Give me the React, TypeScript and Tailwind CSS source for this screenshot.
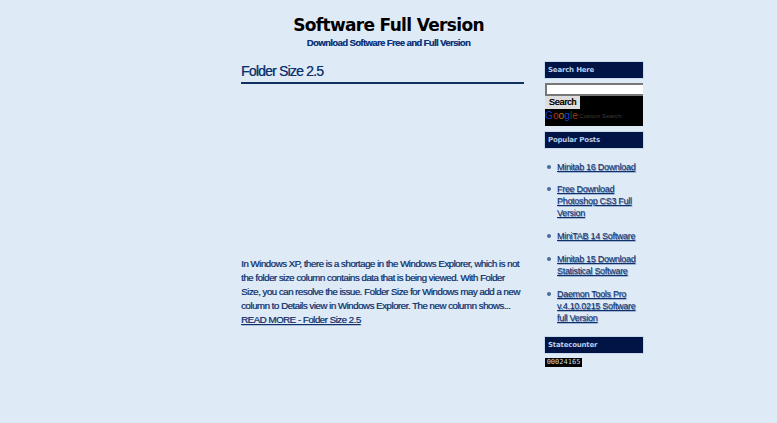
const posts = [
  { title: 'Minitab 16 Download', cls: 'mb-[10px]' },
  { title: 'Free Download Photoshop CS3 Full Version', cls: 'mb-[11px]' },
  { title: 'MiniTAB 14 Software', cls: 'mb-[11px]' },
  { title: 'Minitab 15 Download Statistical Software', cls: 'mb-[11px]' },
  { title: 'Daemon Tools Pro v.4.10.0215 Software full Version', cls: '' },
]

function WidgetTitle({ children }: { children: string }) {
  return (
    <h2 className="h-[16px] bg-[#001446] pl-[3px] font-['DejaVu_Sans',sans-serif] text-[7px] leading-[17px] font-bold tracking-[-0.2px] text-[#b4cde9] outline outline-1 outline-[#c9d9ec]">
      {children}
    </h2>
  )
}

export default function App() {
  return (
    <div className="min-h-[423px] bg-[#dfeaf7] font-['Liberation_Sans',sans-serif]">
      <div className="mx-auto w-[509px]">
        <header className="pt-[14px] text-center">
          <h1 className="font-['DejaVu_Sans',sans-serif] text-[17px] leading-[22px] font-bold tracking-[-0.67px] text-black">
            Software Full Version
          </h1>
          <p className="mt-[1px] text-[9.5px] leading-[12px] font-bold tracking-[-0.6px] text-[#0c3278] [text-shadow:0.3px_0.3px_0.4px_#5f7fb0]">
            Download Software Free and Full Version
          </p>
        </header>

        <div className="mt-[13px] flex">
          <div className="ml-auto flex w-[402px] justify-between">
            <main className="w-[283px] text-[#0f2f63]">
              <h2 className="border-b-2 border-[#10305f] pb-[1px] text-[14px] leading-[19px] tracking-[-0.8px] text-[#0c3069] [text-shadow:0.4px_0.3px_0.4px_#5f7fb0]">
                Folder Size 2.5
              </h2>
              <div className="h-[173px]" />
              <p className="text-[9.8px] leading-[14px] tracking-[-0.53px] text-[#0f3068] [text-shadow:0.5px_0.4px_0.5px_#6482ad]">
                In Windows XP, there is a shortage in the Windows Explorer, which is not the folder size column contains data that is being viewed. With Folder Size, you can resolve the issue. Folder Size for Windows may add a new column to Details view in Windows Explorer. The new column shows...
                <br />
                <a href="#" className="underline">READ MORE - Folder Size 2.5</a>
              </p>
            </main>

            <aside className="w-[98px]">
              <WidgetTitle>Search Here</WidgetTitle>
              <div className="mt-[5px] h-[43px] bg-black">
                <input className="block h-[13px] w-full border-y-2 border-l-2 border-[#777777] bg-white" aria-label="Search" />
                <button className="block h-[13px] w-[35px] bg-[#dedede] text-center text-[9px] leading-[13px] tracking-[-0.2px] text-black [text-shadow:0.4px_0_0_#000000]">
                  Search
                </button>
                <div className="mt-[1px] flex items-center text-[6px] leading-[12px] text-[#3e3e3e]">
                  <span className="w-[34px] shrink-0 text-[10.2px] leading-[12px]">
                    <span className="text-[#1b3fd0]">G</span>
                    <span className="text-[#a83010]">o</span>
                    <span className="text-[#b87808]">o</span>
                    <span className="text-[#1b3fd0]">g</span>
                    <span className="text-[#00651a]">l</span>
                    <span className="text-[#a83010]">e</span>
                  </span>
                  <span className="tracking-[0.1px]">Custom Search</span>
                </div>
              </div>
              <div className="mt-[6px]">
                <WidgetTitle>Popular Posts</WidgetTitle>
              </div>
              <ul className="mt-[13px] mb-[13px] pl-[12px] text-[9px] leading-[12px] tracking-[-0.3px] text-[#0f3068] [text-shadow:0.6px_0.5px_0.5px_#5f7fb0]">
                {posts.map((post) => (
                  <li key={post.title} className={`relative ${post.cls}`}>
                    <span className="absolute top-[4px] -left-[10px] h-[4px] w-[4px] rounded-full bg-[#4a6a9a]" />
                    <a href="#" className="underline">{post.title}</a>
                  </li>
                ))}
              </ul>
              <WidgetTitle>Statecounter</WidgetTitle>
              <div className="mt-[5px] h-[9px] w-[37px] bg-black text-center font-['DejaVu_Sans_Mono',monospace] text-[7px] leading-[9px] text-[#d8d8d8]">
                00024165
              </div>
            </aside>
          </div>
        </div>
      </div>
    </div>
  )
}
